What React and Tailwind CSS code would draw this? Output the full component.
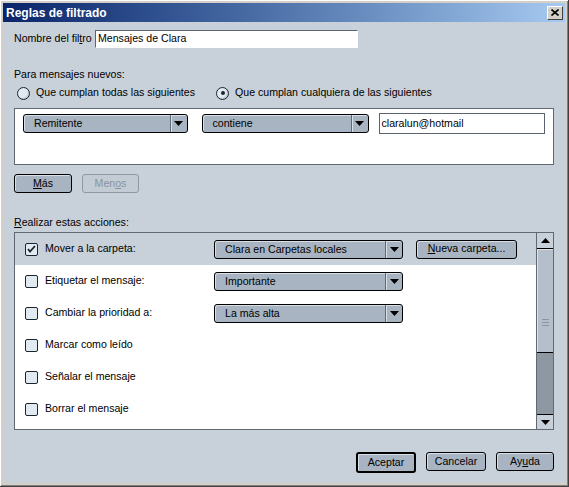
function Arrow({ up }) {
  return (
    <svg width="9" height="5" viewBox="0 0 9 5" className={up ? "rotate-180" : ""}>
      <path d="M0 0h9L4.5 5z" fill="#000" />
    </svg>
  )
}

function Combo({ label, width }) {
  return (
    <div className={`${width} flex h-[19px] rounded-[3px] border border-black bg-[#a8b4c2] shadow-[inset_1px_1px_0_#d8dfe6]`}>
      <div className="flex-1 pl-[10px] leading-[17px]">{label}</div>
      <div className="flex w-[17px] items-center justify-center border-l border-[#5f6a76] shadow-[inset_1px_0_0_#d8dfe6]">
        <Arrow />
      </div>
    </div>
  )
}

function Btn({ children, width, disabled, primary }) {
  const border = primary ? "border-2 border-black h-[21px]" : disabled ? "border border-[#8e98a3] h-[19px]" : "border border-black h-[19px]"
  const color = disabled ? "text-[#8a949e] bg-[#c3cbd4]" : "bg-[#a8b4c2] shadow-[inset_1px_1px_0_#d8dfe6]"
  return (
    <div className={`${width} ${border} ${color} flex items-center justify-center rounded-[3px]`}>
      {children}
    </div>
  )
}

function Check({ checked }) {
  return (
    <div className="flex h-[13px] w-[13px] items-center justify-center rounded-[2px] border border-[#1b2530] bg-[#e2eaf1]">
      {checked && (
        <svg width="9" height="8" viewBox="0 0 9 8">
          <path d="M1 4l2 2.5L8 1" stroke="#1b2530" strokeWidth="1.8" fill="none" />
        </svg>
      )}
    </div>
  )
}

function Radio({ checked }) {
  return (
    <div className="flex h-[13px] w-[13px] items-center justify-center rounded-full border border-[#1b2530] bg-[#e2eaf1] shadow-[inset_-1px_-1px_1px_#b9c4cf]">
      {checked && <div className="h-[4px] w-[4px] rounded-full bg-[#1b2530]" />}
    </div>
  )
}

const actions = [
  { label: "Mover a la carpeta:", checked: true, combo: "Clara en Carpetas locales", extra: true },
  { label: "Etiquetar el mensaje:", combo: "Importante" },
  { label: "Cambiar la prioridad a:", combo: "La más alta" },
  { label: "Marcar como leído" },
  { label: "Señalar el mensaje" },
  { label: "Borrar el mensaje" },
]

export default function App() {
  return (
    <div className="h-[487px] w-[569px] bg-[#d4d0c8] font-['Liberation_Sans',Arial,sans-serif] text-[10.6px] text-black">
      <div className="flex h-full w-full flex-col border-r border-b border-[#404040] p-[3px] shadow-[inset_1px_1px_0_#ffffff,inset_-1px_-1px_0_#808080]">
        {/* title bar */}
        <div className="flex h-[19px] items-center justify-between bg-gradient-to-r from-[#0a246a] to-[#a6caf0] pl-[3px] pr-[2px]">
          <span className="text-[12px] font-bold text-white">Reglas de filtrado</span>
          <div className="flex h-[14px] w-[16px] items-center justify-center border border-t-white border-l-white border-r-[#404040] border-b-[#404040] bg-[#d4d0c8]">
            <svg width="8" height="7" viewBox="0 0 8 7">
              <path d="M0.5 0.5l7 6M7.5 0.5l-7 6" stroke="#000" strokeWidth="1.6" />
            </svg>
          </div>
        </div>

        {/* body */}
        <div className="flex flex-1 flex-col bg-[#c8d0d9] px-[11px]">
          <div className="mt-[8px] flex h-[18px] items-center">
            <span className="w-[81px] whitespace-nowrap">Nombre del fil<span className="underline">t</span>ro</span>
            <div className="flex h-[18px] w-[263px] items-center border border-[#5a6370] border-r-white border-b-white bg-white pl-[2px]">
              Mensajes de Clara
            </div>
          </div>

          <div className="mt-[19px] h-[14px] leading-[14px]">Para mensajes nuevos:</div>

          <div className="mt-[5px] flex h-[14px] items-center whitespace-nowrap">
            <div className="ml-[3px]"><Radio /></div>
            <span className="ml-[6px]">Que cumplan todas las siguientes</span>
            <div className="ml-[21px]"><Radio checked /></div>
            <span className="ml-[6px]">Que cumplan cualquiera de las siguientes</span>
          </div>

          <div className="mt-[8px] h-[57px] border border-[#5f6873] bg-white px-[8px] pt-[4px]">
            <div className="flex items-center">
              <Combo label="Remitente" width="w-[167px]" />
              <div className="ml-[14px]"><Combo label="contiene" width="w-[167px]" /></div>
              <div className="ml-[10px] flex h-[21px] w-[169px] items-center border border-[#5a6370] bg-white pl-[2px]">
                claralun@hotmail
              </div>
            </div>
          </div>

          <div className="mt-[9px] flex gap-[10px]">
            <Btn width="w-[58px]"><span className="underline">M</span>ás</Btn>
            <Btn width="w-[57px]" disabled>Men<span className="underline">o</span>s</Btn>
          </div>

          <div className="mt-[22px] h-[14px] leading-[14px]"><span className="underline">R</span>ealizar estas acciones:</div>

          <div className="mt-[3px] flex h-[198px] border border-[#5f6873] bg-white">
            <div className="flex flex-1 flex-col">
              {actions.map((a, i) => (
                <div key={i} className={`flex h-[32px] items-center pl-[10px] ${i === 0 ? "bg-[#c8d0d9]" : ""}`}>
                  <Check checked={a.checked} />
                  <span className="ml-[7px] w-[169px]">{a.label}</span>
                  {a.combo && <Combo label={a.combo} width="w-[189px]" />}
                  {a.extra && (
                    <div className="ml-[13px]">
                      <Btn width="w-[101px]"><span><span className="underline">N</span>ueva carpeta...</span></Btn>
                    </div>
                  )}
                </div>
              ))}
            </div>
            {/* scrollbar */}
            <div className="flex w-[17px] flex-col border-l border-[#5f6873] bg-[#8e98a2]">
              <div className="flex h-[16px] items-center justify-center border-b border-black bg-[#c8d0d9]">
                <Arrow up />
              </div>
              <div className="flex h-[104px] flex-col items-center justify-center gap-[2px] border-b border-black bg-[#b4bfcb] shadow-[inset_1px_1px_0_#dde3e9]">
                <div className="mt-[44px] h-px w-[7px] bg-[#8a95a1]" />
                <div className="h-px w-[7px] bg-[#8a95a1]" />
                <div className="h-px w-[7px] bg-[#8a95a1]" />
              </div>
              <div className="flex-1" />
              <div className="flex h-[15px] items-center justify-center border-t border-black bg-[#c8d0d9]">
                <Arrow />
              </div>
            </div>
          </div>

          <div className="mt-[22px] flex justify-end gap-[10px]">
            <Btn width="w-[60px]" primary>Aceptar</Btn>
            <Btn width="w-[60px]">Cancelar</Btn>
            <Btn width="w-[58px]">Ay<span className="underline">u</span>da</Btn>
          </div>
        </div>
      </div>
    </div>
  )
}
